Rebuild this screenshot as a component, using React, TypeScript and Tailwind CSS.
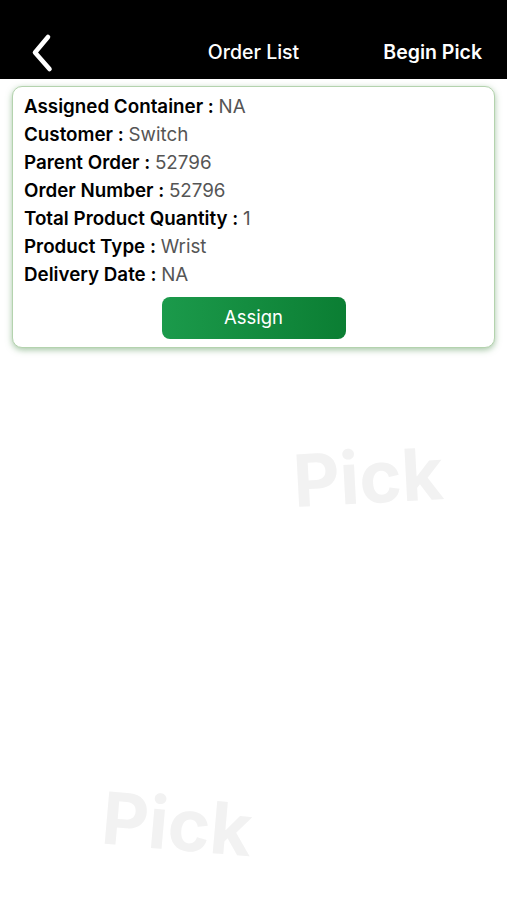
import React from "react";

const rows: [string, string][] = [
  ["Assigned Container", "NA"],
  ["Customer", "Switch"],
  ["Parent Order", "52796"],
  ["Order Number", "52796"],
  ["Total Product Quantity", "1"],
  ["Product Type", "Wrist"],
  ["Delivery Date", "NA"],
];

const App = () => {
  return (
    <div className="relative h-[900px] w-[507px] overflow-hidden bg-white font-['Inter',sans-serif]">
      <header className="grid h-[79px] grid-cols-[1fr_auto_1fr] items-center bg-black pt-[26px]">
        <button className="ml-[30px] flex h-[40px] w-[28px] items-center justify-start">
          <svg width="26" height="40" viewBox="0 0 26 40" fill="none">
            <path
              d="M18 4 L5 19.5 L19.5 36"
              stroke="white"
              strokeWidth="4.6"
              strokeLinecap="round"
              strokeLinejoin="round"
            />
          </svg>
        </button>
        <h1 className="text-[19.5px] font-medium text-white">Order List</h1>
        <span className="mr-[25px] justify-self-end text-[19.5px] font-semibold text-white">
          Begin Pick
        </span>
      </header>

      <main className="px-[12px] pt-[7px]">
        <div className="rounded-[10px] border border-[#b4d3ae] bg-white px-[11px] pb-[8px] pt-[6px] shadow-[0_2px_6px_rgba(90,150,90,0.55)]">
          {rows.map(([label, value]) => (
            <p key={label} className="h-[28px] text-[18.8px] leading-[28px] text-black">
              <span className="font-semibold">{label} : </span>
              <span className="text-[#555555]">{value}</span>
            </p>
          ))}
          <div className="mt-[8px] flex justify-center">
            <button className="h-[42px] w-[184px] rounded-[8px] bg-gradient-to-r from-[#1b9a4b] to-[#0b7e33] text-[18.5px] text-white">
              Assign
            </button>
          </div>
        </div>
      </main>

      <span className="pointer-events-none absolute left-[293px] top-[423px] rotate-[-3deg] text-[72px] font-bold text-[#f2f2f2]">
        Pick
      </span>
      <span className="pointer-events-none absolute left-[102px] top-[770px] rotate-[5deg] text-[72px] font-bold text-[#f2f2f2]">
        Pick
      </span>
    </div>
  );
};

export default App;
